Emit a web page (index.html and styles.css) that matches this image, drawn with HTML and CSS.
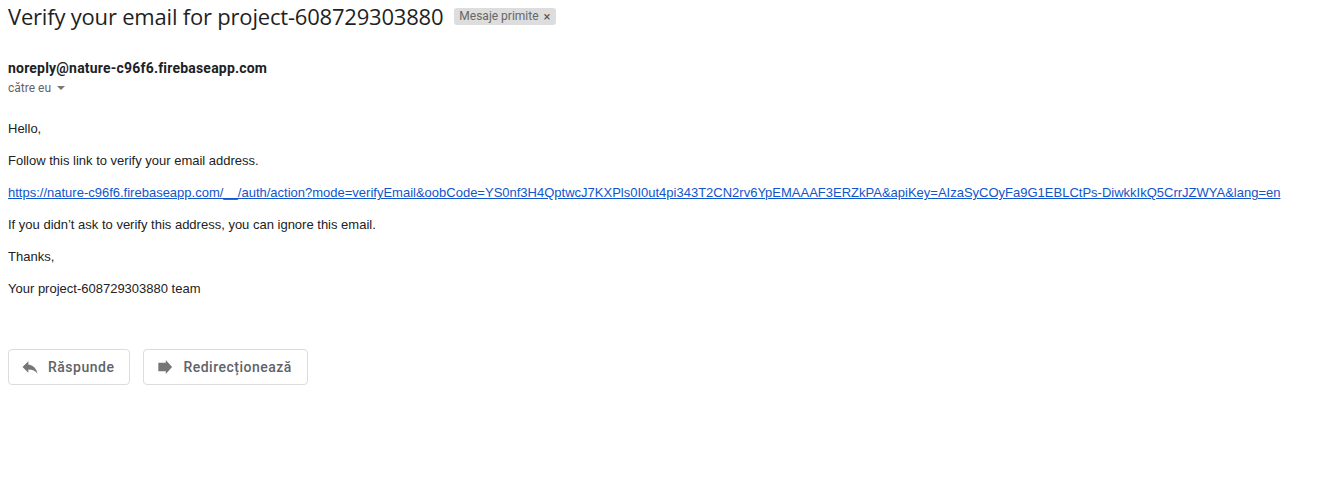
FILE: index.html
```html
<!DOCTYPE html>
<html lang="ro">
<head>
<meta charset="utf-8">
<title>Verify your email</title>
<link rel="stylesheet" href="styles.css">
</head>
<body>
<div class="mail">
  <div class="subject-row">
    <h1 class="subject">Verify your email for project-608729303880</h1>
    <span class="label">Mesaje primite <span class="label-x">×</span></span>
  </div>
  <div class="sender">noreply@nature-c96f6.firebaseapp.com</div>
  <div class="to">către eu <span class="caret"></span></div>
  <div class="body">
    <p>Hello,</p>
    <p>Follow this link to verify your email address.</p>
    <p><a href="#">https://nature-c96f6.firebaseapp.com/__/auth/action?mode=verifyEmail&amp;oobCode=YS0nf3H4QptwcJ7KXPls0I0ut4pi343T2CN2rv6YpEMAAAF3ERZkPA&amp;apiKey=AIzaSyCOyFa9G1EBLCtPs-DiwkkIkQ5CrrJZWYA&amp;lang=en</a></p>
    <p>If you didn’t ask to verify this address, you can ignore this email.</p>
    <p>Thanks,</p>
    <p>Your project-608729303880 team</p>
  </div>
  <div class="actions">
    <button class="btn">
      <svg width="20" height="20" viewBox="0 0 24 24"><path fill="#747775" d="M10 9V5l-7 7 7 7v-4.1c5 0 8.5 1.6 11 5.1-1-5-4-10-11-11z"/></svg>
      Răspunde
    </button>
    <button class="btn">
      <svg width="20" height="20" viewBox="0 0 24 24"><path fill="#747775" d="M13 7V3.5L20.5 12 13 20.5V17H4V7z"/></svg>
      Redirecționează
    </button>
  </div>
</div>
</body>
</html>
```

FILE: styles.css
```css
html, body {
  margin: 0;
  padding: 0;
  background: #fff;
}
body {
  font-family: Roboto, "Liberation Sans", Arial, sans-serif;
  color: #222;
}
.mail {
  padding: 0 8px;
}
.subject-row {
  display: flex;
  align-items: center;
  gap: 11px;
  height: 32px;
}
.subject {
  margin: 0;
  font-family: "Open Sans", Roboto, sans-serif;
  font-weight: 400;
  font-size: 22px;
  letter-spacing: -0.2px;
  color: #1f1f1f;
}
.label {
  display: inline-flex;
  align-items: center;
  gap: 5px;
  background: #dddddd;
  color: #666;
  font-family: Roboto, "Liberation Sans", sans-serif;
  font-size: 12px;
  line-height: 17px;
  padding: 0 5px;
  border-radius: 3px;
  margin-top: 0;
}
.label-x {
  font-size: 13px;
  color: #555;
}
.sender {
  margin-top: 26px;
  font-weight: 700;
  font-size: 14px;
  line-height: 20px;
  letter-spacing: 0.2px;
  color: #202124;
}
.to {
  font-size: 12px;
  line-height: 20px;
  color: #5f6368;
  display: flex;
  align-items: center;
  gap: 4px;
}
.caret {
  display: inline-block;
  width: 0;
  height: 0;
  border-left: 4px solid transparent;
  border-right: 4px solid transparent;
  border-top: 4px solid #777;
  margin-left: 2px;
}
.body {
  margin-top: 23px;
  font-family: Arial, "Liberation Sans", sans-serif;
  font-size: 13px;
  color: #222;
}
.body p {
  margin: 0 0 16px;
  line-height: 16px;
}
.body a {
  color: #1155cc;
  text-decoration: underline;
}
.actions {
  margin-top: 52px;
  display: flex;
  gap: 13px;
}
.btn {
  display: inline-flex;
  align-items: center;
  gap: 8px;
  height: 36px;
  padding: 0 15px 0 11px;
  background: #fff;
  border: 1px solid #dadce0;
  border-radius: 4px;
  font-family: Roboto, "Open Sans", sans-serif;
  font-weight: 500;
  font-size: 14px;
  color: #5f6368;
  letter-spacing: 0.5px;
}
.btn svg {
  flex: none;
}
```
